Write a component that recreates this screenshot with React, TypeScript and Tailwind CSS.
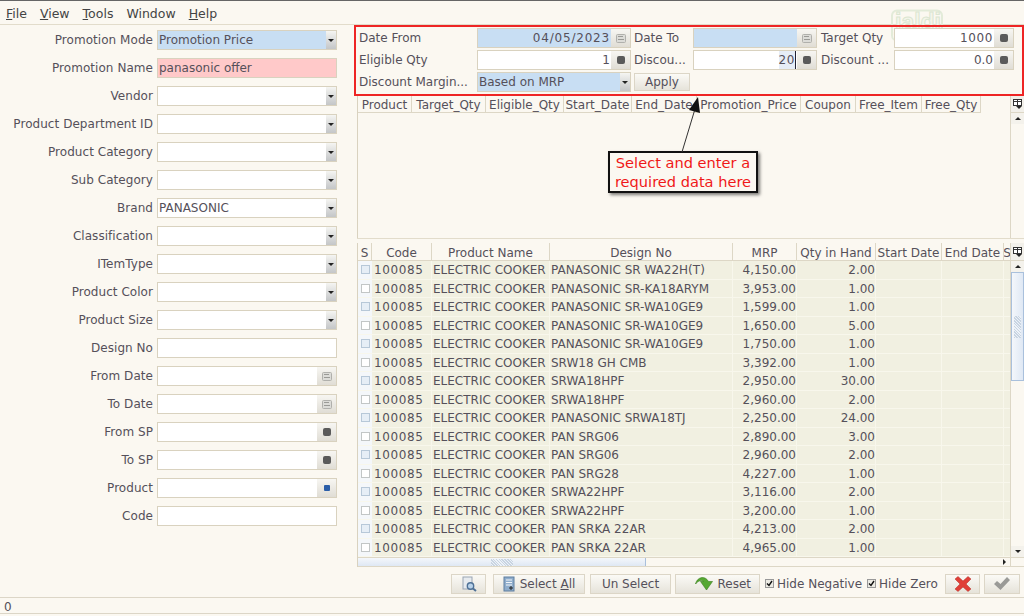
import type { ReactNode } from "react";

const labelText = "text-[#55505a]";

const formRows: { label: string; kind: string; value?: string; tone?: string }[] = [
  { label: "Promotion Mode", kind: "select", value: "Promotion Price", tone: "bg-[#c8def3]" },
  { label: "Promotion Name", kind: "text", value: "panasonic offer", tone: "bg-[#ffc9c9]" },
  { label: "Vendor", kind: "select" },
  { label: "Product Department ID", kind: "select" },
  { label: "Product Category", kind: "select" },
  { label: "Sub Category", kind: "select" },
  { label: "Brand", kind: "select", value: "PANASONIC" },
  { label: "Classification", kind: "select" },
  { label: "ITemType", kind: "select" },
  { label: "Product Color", kind: "select" },
  { label: "Product Size", kind: "select" },
  { label: "Design No", kind: "text" },
  { label: "From Date", kind: "date" },
  { label: "To Date", kind: "date" },
  { label: "From SP", kind: "spin" },
  { label: "To SP", kind: "spin" },
  { label: "Product", kind: "lookup" },
  { label: "Code", kind: "text" },
];

const upperCols = [
  ["Product", "w-[54px]"],
  ["Target_Qty", "w-[74px]"],
  ["Eligible_Qty", "w-[78px]"],
  ["Start_Date", "w-[68px]"],
  ["End_Date", "w-[65px]"],
  ["Promotion_Price", "w-[104px]"],
  ["Coupon", "w-[55px]"],
  ["Free_Item", "w-[66px]"],
  ["Free_Qty", "w-[59px]"],
];

const lowerCols = [
  ["S", "w-[14px]"],
  ["Code", "w-[60px]"],
  ["Product Name", "w-[118px]"],
  ["Design No", "w-[183px]"],
  ["MRP", "w-[64px]"],
  ["Qty in Hand", "w-[79px]"],
  ["Start Date", "w-[66px]"],
  ["End Date", "w-[62px]"],
  ["S", "w-[7px]"],
];

const rows = [
  ["PANASONIC SR WA22H(T)", "4,150.00", "2.00"],
  ["PANASONIC SR-KA18ARYM", "3,953.00", "1.00"],
  ["PANASONIC SR-WA10GE9", "1,599.00", "1.00"],
  ["PANASONIC SR-WA10GE9", "1,650.00", "5.00"],
  ["PANASONIC SR-WA10GE9", "1,750.00", "1.00"],
  ["SRW18 GH CMB", "3,392.00", "1.00"],
  ["SRWA18HPF", "2,950.00", "30.00"],
  ["SRWA18HPF", "2,960.00", "2.00"],
  ["PANASONIC SRWA18TJ", "2,250.00", "24.00"],
  ["PAN SRG06", "2,890.00", "3.00"],
  ["PAN SRG06", "2,960.00", "2.00"],
  ["PAN SRG28", "4,227.00", "1.00"],
  ["SRWA22HPF", "3,116.00", "2.00"],
  ["SRWA22HPF", "3,200.00", "1.00"],
  ["PAN SRKA 22AR", "4,213.00", "2.00"],
  ["PAN SRKA 22AR", "4,965.00", "1.00"],
];

const CalendarGlyph = () => (
  <svg width="10" height="9" viewBox="0 0 10 9">
    <rect x="0.5" y="0.5" width="9" height="8" rx="1" fill="#dcdcd8" stroke="#b0b0ac" />
    <rect x="2" y="2" width="5" height="1" fill="#9a9a96" />
    <rect x="2" y="5" width="6" height="1" fill="#9a9a96" />
  </svg>
);

const SpinGlyph = () => <div className="h-[8px] w-[8px] rounded-[2px] bg-[#5a5a5a]" />;
const LookupGlyph = () => <div className="h-[6px] w-[6px] rounded-[1px] bg-[#2b5ea8]" />;

const FieldButton = ({ children }: { children: ReactNode }) => (
  <div className="flex h-full w-[19px] shrink-0 items-center justify-center bg-gradient-to-b from-[#f7f6f2] to-[#e0ddd5]">
    {children}
  </div>
);

const ArrowBox = () => (
  <div className="flex h-full w-[10px] shrink-0 items-center justify-center bg-gradient-to-b from-[#f5f5f2] to-[#c4c6c8]">
    <div className="h-0 w-0 border-x-[3px] border-t-[3px] border-x-transparent border-t-[#222]" />
  </div>
);

const Field = ({ kind, value, tone, align, width }: { kind: string; value?: ReactNode; tone?: string; align?: string; width: string }) => (
  <div className={`flex h-[20px] ${width} shrink-0 border border-[#d9d2bf] bg-white`}>
    <div className={`flex min-w-0 flex-1 items-center overflow-hidden whitespace-nowrap px-[1px] ${tone ?? ""} ${align ?? ""}`}>{value}</div>
    {kind === "select" && <ArrowBox />}
    {kind === "date" && <FieldButton><CalendarGlyph /></FieldButton>}
    {kind === "spin" && <FieldButton><SpinGlyph /></FieldButton>}
    {kind === "lookup" && <FieldButton><LookupGlyph /></FieldButton>}
  </div>
);

const FormLabel = ({ children, width }: { children: ReactNode; width: string }) => (
  <div className={`${width} shrink-0 overflow-hidden whitespace-nowrap ${labelText}`}>{children}</div>
);

const HeaderCell = ({ label, width }: { label: string; width: string }) => (
  <div className={`${width} flex shrink-0 items-center justify-center overflow-hidden whitespace-nowrap border-r border-b border-[#ddd7c6] pt-[2px]`}>{label}</div>
);

const Corner = () => (
  <div className="flex h-full w-[14px] shrink-0 items-center justify-center border-l border-b border-[#ddd7c6] bg-[#f2f0ea]">
    <svg width="10" height="10" viewBox="0 0 10 10">
      <rect x="0.5" y="0.5" width="8" height="6" fill="#fff" stroke="#333" />
      <path d="M0.5 2.5h8M4.5 0.5v6" stroke="#333" />
      <path d="M3 7h6L6 10z" fill="#222" />
    </svg>
  </div>
);

const ToolButton = ({ children, width, justify }: { children: ReactNode; width: string; justify?: string }) => (
  <div className={`flex h-[20px] ${width} shrink-0 items-center ${justify ?? "justify-center"} gap-[4px] border border-[#dcd6c7] bg-gradient-to-b from-[#fbfaf6] to-[#e6e3da]`}>
    {children}
  </div>
);

const CheckItem = ({ label }: { label: string }) => (
  <div className="flex items-center gap-[3px]">
    <div className="flex h-[9px] w-[9px] items-center justify-center border border-[#999] bg-[#ecebe4]">
      <svg width="7" height="7" viewBox="0 0 7 7">
        <path d="M1 3.5L3 5.5 6 1" stroke="#111" strokeWidth="1.4" fill="none" />
      </svg>
    </div>
    <span>{label}</span>
  </div>
);

export default function App() {
  return (
    <div className="relative flex h-[616px] w-[1024px] flex-col overflow-hidden border-t border-[#666] bg-[#fbf8f1] font-['DejaVu_Sans',sans-serif] text-[12px] text-[#55505a]">
      {/* watermark sits behind the form */}
      <svg className="absolute left-[890px] top-[8px]" width="54" height="36" viewBox="0 0 54 36">
        <path d="M7 1.5h40a5 5 0 0 1 5 5v20a5 5 0 0 1-5 5H14l-7 3v-3a5 5 0 0 1-5-5v-20a5 5 0 0 1 5-5z" stroke="#e3ebd9" strokeWidth="2" fill="none" />
      </svg>
      <div className="absolute left-[895px] top-[6px] font-['Liberation_Sans',sans-serif] text-[23px] font-bold leading-[30px] text-[#f4f5ea] [-webkit-text-stroke:1px_#dbe6d1]">jaldi</div>

      <div className="flex h-[24px] shrink-0 items-center gap-[13px] border-b border-[#e2dccb] pl-[6px] pt-[3px] text-[12.5px] text-[#444]">
        <span><u>F</u>ile</span>
        <span><u>V</u>iew</span>
        <span><u>T</u>ools</span>
        <span>Window</span>
        <span><u>H</u>elp</span>
      </div>

      <div className="flex h-[542px] shrink-0">
        <div className="flex w-[354px] shrink-0 flex-col gap-[8px] pt-[5px]">
          {formRows.map((r) => (
            <div key={r.label} className="flex h-[20px] items-center justify-end gap-[4px] pr-[17px]">
              <span className="whitespace-nowrap tracking-[0.05px]">{r.label}</span>
              <Field kind={r.kind} value={r.value} tone={r.tone} width="w-[180px]" />
            </div>
          ))}
        </div>

        <div className="flex min-w-0 flex-1 flex-col">
          <div className="relative flex h-[71px] shrink-0 flex-col gap-[2px] border-2 border-[#ee2525] pl-[3px] pt-[1px]">
            <div className="flex h-[20px] items-center">
              <FormLabel width="w-[118px]">Date From</FormLabel>
              <Field kind="date" value={<span className="tracking-[0.8px]">04/05/2023</span>} tone="bg-[#c8def3]" align="justify-end" width="w-[154px]" />
              <FormLabel width="w-[62px] pl-[3px]">Date To</FormLabel>
              <Field kind="date" tone="bg-[#c8def3]" width="w-[124px]" />
              <FormLabel width="w-[77px] pl-[4px]">Target Qty</FormLabel>
              <Field kind="spin" value={<span className="tracking-[0.6px]">1000</span>} align="justify-end" width="w-[120px]" />
            </div>
            <div className="flex h-[20px] items-center">
              <FormLabel width="w-[118px]">Eligible Qty</FormLabel>
              <Field kind="spin" value="1" align="justify-end" width="w-[154px]" />
              <FormLabel width="w-[62px] pl-[3px]">Discou...</FormLabel>
              <Field
                kind="spin"
                value={<span className="border-r border-[#223] bg-[#e6edf7] tracking-[0.6px]">20</span>}
                align="justify-end"
                width="w-[124px]"
              />
              <FormLabel width="w-[77px] pl-[4px]">Discount ...</FormLabel>
              <Field kind="spin" value="0.0" align="justify-end" width="w-[120px]" />
            </div>
            <div className="flex h-[20px] items-center">
              <FormLabel width="w-[118px]">Discount Margin...</FormLabel>
              <Field kind="select" value="Based on MRP" tone="bg-[#c8def3]" width="w-[154px]" />
              <div className="ml-[3px] flex h-[18px] w-[56px] items-center justify-center border border-[#dcd6c7] bg-gradient-to-b from-[#fbfaf6] to-[#e6e3da]">Apply</div>
            </div>
          </div>

          <div className="ml-[3px] flex h-[142px] shrink-0 border-l border-[#d9d2bf]">
            <div className="flex h-[17px] w-[652px] shrink-0">
              {upperCols.map(([label, width]) => (
                <HeaderCell key={label} label={label} width={width} />
              ))}
            </div>
            <div className="ml-auto flex w-[14px] shrink-0 flex-col">
              <div className="h-[17px] shrink-0"><Corner /></div>
              <div className="flex flex-1 flex-col border-l border-[#ddd7c6]">
                <div className="flex h-[11px] shrink-0 items-center justify-center bg-[#f4f2ec]">
                  <div className="h-0 w-0 border-x-[3px] border-b-[3px] border-x-transparent border-b-[#222]" />
                </div>
              </div>
            </div>
          </div>

          <div className="ml-[3px] h-[5px] shrink-0 border-t border-[#e2dccb]" />

          <div className="ml-[3px] flex min-h-0 flex-1 flex-col border-l border-[#d9d2bf]">
            <div className="flex h-[18px] shrink-0">
              <div className="flex min-w-0 flex-1">
                {lowerCols.map(([label, width], i) => (
                  <HeaderCell key={i} label={label} width={width} />
                ))}
              </div>
              <Corner />
            </div>
            <div className="flex min-h-0 flex-1">
              <div className="min-w-0 flex-1 overflow-hidden">
                {rows.map((r, i) => (
                  <div key={i} className="flex h-[18.5px] items-center border-b border-[#f8f7ec] bg-[#f1f0e1]">
                    <div className="flex h-full w-[14px] shrink-0 items-center justify-center bg-[#f4f7fa]">
                      <div className={`h-[9px] w-[9px] border ${i % 2 ? "border-[#c2c6c6] bg-white" : "border-[#b7c8d8] bg-[#e6eef6]"}`} />
                    </div>
                    <div className="flex h-full w-[60px] shrink-0 items-center border-r border-[#f8f7ec] pl-[2px] pt-[1px] tracking-[0.6px]">100085</div>
                    <div className="flex h-full w-[118px] shrink-0 items-center overflow-hidden whitespace-nowrap border-r border-[#f8f7ec] pl-[1px] pt-[1px]">ELECTRIC COOKER</div>
                    <div className="flex h-full w-[183px] shrink-0 items-center overflow-hidden whitespace-nowrap border-r border-[#f8f7ec] pl-[1px] pt-[1px]">{r[0]}</div>
                    <div className="flex h-full w-[64px] shrink-0 items-center justify-end border-r border-[#f8f7ec] pt-[1px]">{r[1]}</div>
                    <div className="flex h-full w-[79px] shrink-0 items-center justify-end border-r border-[#f8f7ec] pt-[1px]">{r[2]}</div>
                    <div className="h-full w-[66px] shrink-0 border-r border-[#f8f7ec]" />
                    <div className="h-full w-[62px] shrink-0 border-r border-[#f8f7ec]" />
                  </div>
                ))}
              </div>
              <div className="flex w-[14px] shrink-0 flex-col border-l border-[#ddd7c6]">
                <div className="flex h-[11px] shrink-0 items-center justify-center bg-[#f4f2ec]">
                  <div className="h-0 w-0 border-x-[3px] border-b-[3px] border-x-transparent border-b-[#222]" />
                </div>
                <div className="flex h-[109px] shrink-0 items-center justify-center border border-[#a9c0dc] bg-gradient-to-r from-[#f4f7fb] to-[#dfe8f4]">
                  <div className="h-[22px] w-[7px] bg-[repeating-linear-gradient(45deg,#c8d4e2_0px,#c8d4e2_1px,#edf2f8_1px,#edf2f8_2px)]" />
                </div>
                <div className="flex-1" />
                <div className="flex h-[11px] shrink-0 items-center justify-center bg-[#f4f2ec]">
                  <div className="h-0 w-0 border-x-[3px] border-t-[3px] border-x-transparent border-t-[#222]" />
                </div>
              </div>
            </div>
            <div className="flex h-[10px] shrink-0 items-stretch border-y border-[#ddd7c6]">
              <div className="flex w-[288px] items-center justify-center border-r border-[#a9c0dc] bg-gradient-to-b from-[#f4f7fb] to-[#dfe8f4]">
                <div className="h-[7px] w-[22px] bg-[repeating-linear-gradient(45deg,#c8d4e2_0px,#c8d4e2_1px,#edf2f8_1px,#edf2f8_2px)]" />
              </div>
              <div className="flex-1" />
              <div className="flex w-[12px] items-center justify-center">
                <div className="h-0 w-0 border-y-[3px] border-l-[3px] border-y-transparent border-l-[#222]" />
              </div>
              <div className="w-[14px] border-l border-[#ddd7c6]" />
            </div>
          </div>
        </div>
      </div>

      <div className="flex h-[30px] shrink-0 items-center pl-[451px] pt-[3px]">
        <ToolButton width="w-[35px]">
          <svg width="16" height="16" viewBox="0 0 16 16">
            <rect x="2" y="1" width="9" height="12" fill="#e7ebef" stroke="#9aa5b3" />
            <circle cx="9.5" cy="10" r="3.2" fill="#b9d2ea" stroke="#4f7196" strokeWidth="1.4" />
            <path d="M12 12.5L15 15" stroke="#4f7196" strokeWidth="2" />
          </svg>
        </ToolButton>
        <div className="ml-[7px]">
          <ToolButton width="w-[92px]">
            <svg width="13" height="16" viewBox="0 0 13 16">
              <rect x="1" y="1" width="10" height="14" fill="#8fadcc" stroke="#5f7f9f" />
              <path d="M3 4h6M3 6.5h6M3 9h6" stroke="#f2f5f8" />
              <path d="M6 12h4M8 10v4" stroke="#222" />
            </svg>
            <span>Select <u>A</u>ll</span>
          </ToolButton>
        </div>
        <div className="ml-[5px]"><ToolButton width="w-[81px]">Un Select</ToolButton></div>
        <div className="ml-[4px]">
          <ToolButton width="w-[85px]" justify="justify-end pr-[8px]">
            <svg width="18" height="15" viewBox="0 0 18 15">
              <path d="M0.5 8C2 1 10 -1 13.5 5.5H17.5L11.5 14 5.5 5.5H8.5C6.5 3.5 3 5 0.5 8z" fill="#56a832" stroke="#3a7d1e" strokeWidth="0.6" />
            </svg>
            <span>Reset</span>
          </ToolButton>
        </div>
        <div className="ml-[5px]"><CheckItem label="Hide Negative" /></div>
        <div className="ml-[5px]"><CheckItem label="Hide Zero" /></div>
        <div className="ml-auto flex gap-[4px] pr-[4px]">
          <ToolButton width="w-[35px]">
            <svg width="18" height="16" viewBox="0 0 18 16">
              <path d="M1 3L4 0.5 9 5l5-4.5L17 3l-5 5 5 5-3 2.5L9 11l-5 4.5L1 13l5-5z" fill="#e04038" stroke="#b52a24" strokeWidth="0.5" />
            </svg>
          </ToolButton>
          <ToolButton width="w-[36px]">
            <svg width="18" height="15" viewBox="0 0 18 15">
              <path d="M1 8l3-3 3.5 3L14 1l3 3-9.5 10z" fill="#9a9a97" />
            </svg>
          </ToolButton>
        </div>
      </div>

      <div className="flex h-[17px] shrink-0 items-center border-y border-[#dcd6c7] pl-[4px] pt-[2px]">0</div>

      <div className="absolute left-[608px] top-[150px] w-[150px] border-2 border-[#111] bg-[#fbf8f1] text-center text-[14.6px] leading-[19px] text-[#f01818] shadow-[2px_2px_3px_rgba(0,0,0,0.5)]">
        Select and enter a<br />required data here
      </div>

      <svg className="absolute left-[675px] top-[94px]" width="30" height="60" viewBox="0 0 30 60">
        <path d="M7 57L20 14" stroke="#333" strokeWidth="1" fill="none" />
        <path d="M23 2L14 15 25 18z" fill="#111" />
      </svg>
    </div>
  );
}
